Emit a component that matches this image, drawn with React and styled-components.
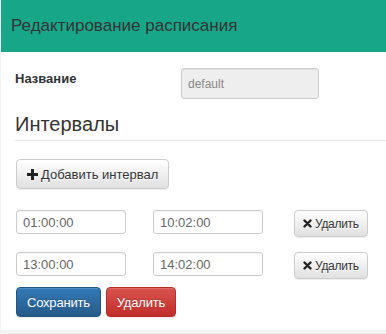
import React from 'react';
import styled, { createGlobalStyle } from 'styled-components';

const GlobalStyle = createGlobalStyle`
  html, body {
    margin: 0;
    padding: 0;
    background: #f3f3f4;
    font-family: "Liberation Sans", Arial, sans-serif;
    color: #333;
  }
  * { box-sizing: border-box; }
`;

const Panel = styled.div`
  margin-left: 1px;
  width: 385px;
  height: 330px;
  background: #fff;
  overflow: hidden;
`;

const Header = styled.div`
  height: 52px;
  background: #18a689;
  padding: 0 10px;
  display: flex;
  align-items: center;
  font-size: 17px;
  color: #333;
`;

const Body = styled.div`
  padding: 14px 0 0 14px;
`;

const NameRow = styled.div`
  display: grid;
  grid-template-columns: 166px 138px;
  align-items: center;
  height: 31px;
  margin-top: 2px;
`;

const Label = styled.label`
  font-weight: bold;
  font-size: 13px;
  align-self: start;
  padding-top: 3px;
`;

const Input = styled.input`
  width: ${(p) => p.$w || 110}px;
  height: ${(p) => p.$h || 24}px;
  padding: 0 6px;
  font-family: inherit;
  font-size: ${(p) => p.$fs || 13}px;
  color: ${(p) => (p.disabled ? '#888' : '#666')};
  background: ${(p) => (p.disabled ? '#eee' : '#fff')};
  border: 1px solid #ccc;
  border-radius: 3px;
  box-shadow: inset 0 1px 1px rgba(0, 0, 0, 0.05);
`;

const SectionTitle = styled.h3`
  margin: 13px 0 0;
  padding-bottom: 4px;
  font-size: 20px;
  font-weight: normal;
  line-height: 24px;
  border-bottom: 1px solid #e5e5e5;
`;

const Button = styled.button`
  display: inline-flex;
  align-items: center;
  justify-self: start;
  gap: ${(p) => p.$gap || 4}px;
  height: ${(p) => p.$h || 30}px;
  padding: 0 ${(p) => p.$px || 12}px;
  font-family: inherit;
  font-size: ${(p) => p.$fs || 13}px;
  letter-spacing: ${(p) => p.$ls || 0}px;
  color: #333;
  border: 1px solid #ccc;
  border-radius: 4px;
  background: linear-gradient(to bottom, #fff 0%, #e0e0e0 100%);
  box-shadow: inset 0 1px 0 rgba(255, 255, 255, 0.15), 0 1px 1px rgba(0, 0, 0, 0.075);
  text-shadow: 0 1px 0 #fff;
  cursor: pointer;
`;

const PrimaryButton = styled(Button)`
  color: #fff;
  text-shadow: 0 -1px 0 rgba(0, 0, 0, 0.2);
  border-color: ${(p) => (p.$danger ? '#b92c28' : '#245580')};
  background: ${(p) =>
    p.$danger
      ? 'linear-gradient(to bottom, #d9534f 0%, #c12e2a 100%)'
      : 'linear-gradient(to bottom, #337ab7 0%, #265a88 100%)'};
`;

const AddWrap = styled.div`
  margin-top: 18px;
  padding-left: 1px;
`;

const IntervalList = styled.div`
  display: flex;
  flex-direction: column;
  gap: 15px;
  margin-top: 21px;
  padding-left: 1px;
`;

const IntervalRow = styled.div`
  display: grid;
  grid-template-columns: 137px 141px auto;
  align-items: start;
`;

const Actions = styled.div`
  display: flex;
  gap: 5px;
  margin-top: 8px;
  padding-left: 1px;
`;

const PlusIcon = () => (
  <svg width="11" height="11" viewBox="0 0 11 11">
    <path d="M4 0h3v4h4v3H7v4H4V7H0V4h4z" fill="#222" />
  </svg>
);

const CrossIcon = () => (
  <svg width="9" height="9" viewBox="0 0 9 9">
    <path d="M1.5 1.5l6 6M7.5 1.5l-6 6" stroke="#222" strokeWidth="2.4" strokeLinecap="round" />
  </svg>
);

const intervals = [
  { from: '01:00:00', to: '10:02:00' },
  { from: '13:00:00', to: '14:02:00' },
];

export default function App() {
  return (
    <>
      <GlobalStyle />
      <Panel>
        <Header>Редактирование расписания</Header>
        <Body>
          <NameRow>
            <Label>Название</Label>
            <Input $w={138} $h={31} $fs={12} value="default" disabled readOnly />
          </NameRow>
          <SectionTitle>Интервалы</SectionTitle>
          <AddWrap>
            <Button $px={10} $gap={3}>
              <PlusIcon /> Добавить интервал
            </Button>
          </AddWrap>
          <IntervalList>
            {intervals.map((it) => (
              <IntervalRow key={it.from}>
                <Input value={it.from} readOnly />
                <Input value={it.to} readOnly />
                <Button $h={27} $px={8} $fs={12} $gap={3} $ls={-0.3}>
                  <CrossIcon /> Удалить
                </Button>
              </IntervalRow>
            ))}
          </IntervalList>
          <Actions>
            <PrimaryButton $fs={13} $px={10} $ls={-0.2}>Сохранить</PrimaryButton>
            <PrimaryButton $fs={13} $px={10} $ls={-0.2} $danger>Удалить</PrimaryButton>
          </Actions>
        </Body>
      </Panel>
    </>
  );
}
